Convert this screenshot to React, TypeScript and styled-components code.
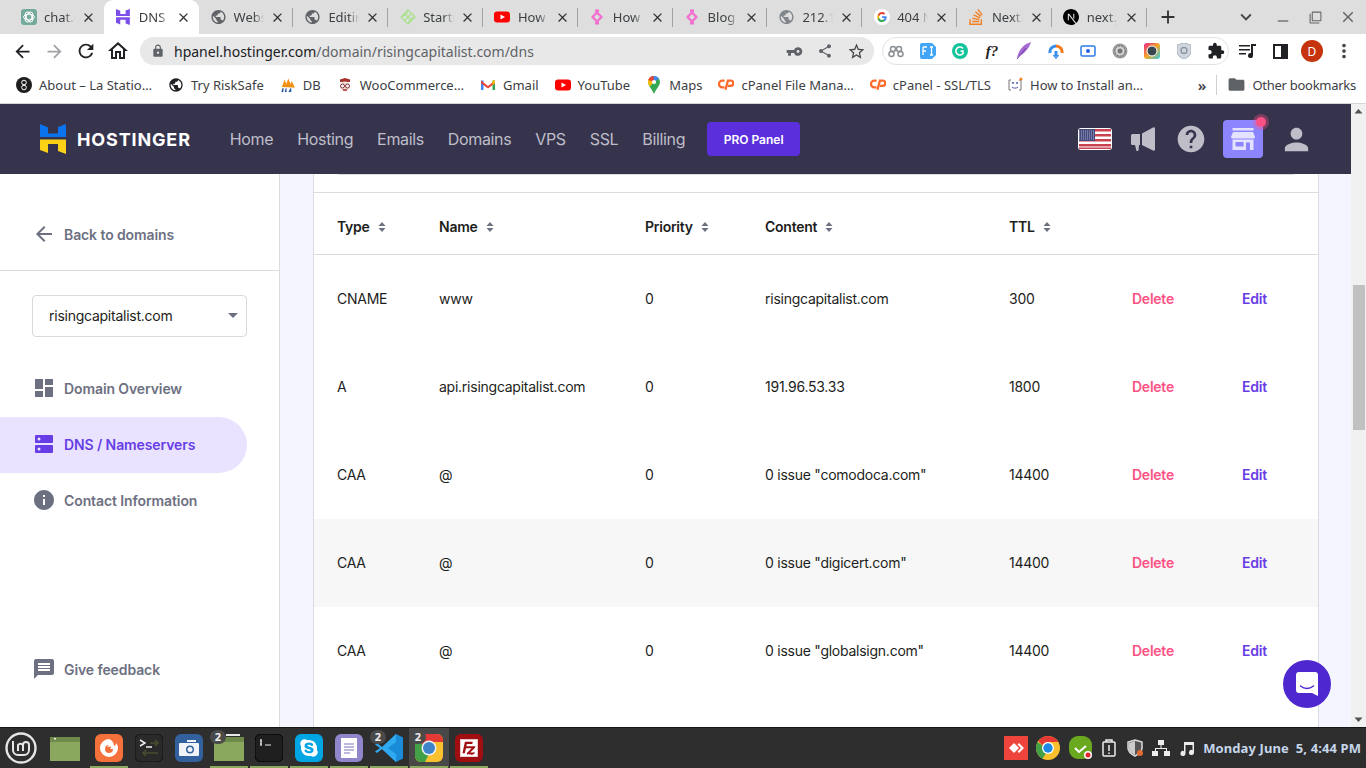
import React from "react"
import styled, { createGlobalStyle } from "styled-components"
import {
  MdAdd,
  MdArrowBack,
  MdArrowForward,
  MdClose,
  MdExtension,
  MdFolder,
  MdHelp,
  MdInfo,
  MdLock,
  MdMessage,
  MdMoreVert,
  MdOutlineHome,
  MdPerson,
  MdPublic,
  MdRefresh,
  MdShare,
  MdStarBorder,
  MdVpnKey,
  MdKeyboardArrowDown,
  MdRemove,
  MdFilterNone,
} from "react-icons/md"
import { FaSkype } from "react-icons/fa"
import { SiFilezilla, SiNextdotjs, SiStackoverflow } from "react-icons/si"

const UI_FONT = `"Noto Sans", "Liberation Sans", sans-serif`
const PANEL_FONT = `Inter, "Liberation Sans", sans-serif`

const GlobalStyle = createGlobalStyle`
  html, body {
    margin: 0;
    padding: 0;
    overflow: hidden;
    background: #fff;
  }
  * {
    box-sizing: border-box;
  }
`

const FontGlyph = styled.span`
  font-family: "Liberation Serif", serif;
  font-style: italic;
  font-weight: 700;
  font-size: 15px;
  color: #222;
`

// ---- little drawings ----

const ChatGptIcon = () => (
  <svg width="16" height="16" viewBox="0 0 16 16">
    <rect width="16" height="16" rx="3" fill="#74aa9c" />
    <g fill="none" stroke="#fff" strokeWidth="1">
      <ellipse cx="8" cy="8" rx="5.4" ry="2.8" />
      <ellipse cx="8" cy="8" rx="5.4" ry="2.8" transform="rotate(60 8 8)" />
      <ellipse cx="8" cy="8" rx="5.4" ry="2.8" transform="rotate(120 8 8)" />
    </g>
  </svg>
)

const HostingerMark = ({ size = 16, mono }: { size?: number; mono?: string }) => (
  <svg width={(size * 26) / 30} height={size} viewBox="0 0 26 30">
    <polygon points="0,0 8,3.5 8,9.5 18,9.5 18,3 26,0 26,13 0,13" fill={mono ?? "#0c73ef"} />
    <polygon points="0,15.5 26,15.5 26,30 18,27 18,20 8,20 8,29 0,26" fill={mono ?? "#fcd116"} />
  </svg>
)

const LatticeIcon = () => (
  <svg width="16" height="16" viewBox="0 0 16 16">
    <g fill="none" stroke="#a9e28c" strokeWidth="1.2">
      <rect x="3" y="3" width="10" height="10" transform="rotate(45 8 8)" />
      <path d="M4.5 4.5l7 7M11.5 4.5l-7 7M2.5 8l5.500-5.500M8 13.500L13.500 8" />
    </g>
  </svg>
)

const YoutubeIcon = () => (
  <svg width="16" height="16" viewBox="0 0 16 16">
    <rect y="2.500" width="16" height="11" rx="3" fill="#f00" />
    <polygon points="6.500,5.500 11,8 6.500,10.500" fill="#fff" />
  </svg>
)

const RingIcon = () => (
  <svg width="16" height="16" viewBox="0 0 16 16">
    <path d="M8 3.500L12.500 8 8 12.500 3.500 8z" fill="none" stroke="#f26fd0" strokeWidth="2.400" strokeLinejoin="round" />
    <path d="M6 0.500h4v2.500H6zM6 13h4v2.500H6z" fill="#f26fd0" />
  </svg>
)

const GoogleIcon = () => (
  <svg width="16" height="16" viewBox="0 0 16 16">
    <circle cx="8" cy="8" r="8" fill="#fff" />
    <path d="M12.600 8.200c0-.4 0-.7-.1-1H8v1.900h2.600c-.1.600-.5 1.100-1 1.500v1.200h1.600c.9-.9 1.400-2.100 1.400-3.600z" fill="#4285f4" />
    <path d="M8 13c1.300 0 2.400-.4 3.200-1.200l-1.600-1.200c-.4.300-1 .5-1.600.5-1.300 0-2.300-.8-2.700-2H3.700v1.300C4.500 12 6.100 13 8 13z" fill="#34a853" />
    <path d="M5.300 9.100a3 3 0 010-2V5.800H3.700a5 5 0 000 4.500z" fill="#fbbc05" />
    <path d="M8 5.100c.7 0 1.300.2 1.800.7l1.400-1.400C10.400 3.500 9.300 3 8 3 6.100 3 4.500 4.100 3.700 5.800l1.600 1.300c.4-1.200 1.400-2 2.700-2z" fill="#ea4335" />
  </svg>
)

const ChromeIcon = ({ size = 24 }: { size?: number }) => (
  <svg width={size} height={size} viewBox="0 0 24 24">
    <circle cx="12" cy="12" r="12" fill="#fbc02d" />
    <path d="M12 0a12 12 0 0110.400 6H12a6 6 0 00-5.500 3.500L2.300 4.900A12 12 0 0112 0z" fill="#e53935" />
    <path d="M1.600 6a12 12 0 005 16.700L11 15.500A6 6 0 016.500 9.500z" fill="#43a047" />
    <circle cx="12" cy="12" r="6" fill="#fff" />
    <circle cx="12" cy="12" r="4.700" fill="#1e88e5" />
  </svg>
)

const ChromeTile = () => (
  <svg width="28" height="28" viewBox="0 0 28 28">
    <rect width="28" height="28" rx="6" fill="#fbc02d" />
    <path d="M6 0h16a6 6 0 016 6v2H14a6 6 0 00-6 4L2 2a6 6 0 014-2z" fill="#e53935" />
    <path d="M2 2l6 10 6 8-4 8H6a6 6 0 01-6-6V6a6 6 0 012-4z" fill="#43a047" />
    <circle cx="14" cy="14" r="7.500" fill="#eef1f3" />
    <circle cx="14" cy="14" r="6" fill="#3f84c8" />
  </svg>
)

const GmailIcon = () => (
  <svg width="16" height="16" viewBox="0 0 16 16">
    <path d="M1 3.500h2.500V13H1z" fill="#4285f4" />
    <path d="M12.500 3.500H15V13h-2.500z" fill="#34a853" />
    <path d="M1 3.500L8 9l7-5.500v2.800L8 11.500 1 6.300z" fill="#ea4335" />
    <path d="M12.500 3.500H15v2.800l-2.500 1.900z" fill="#fbbc05" />
  </svg>
)

const MapsIcon = () => (
  <svg width="16" height="18" viewBox="0 0 16 18">
    <path d="M8 0a6 6 0 00-6 6c0 3.500 4 7 6 12 2-5 6-8.500 6-12a6 6 0 00-6-6z" fill="#34a853" />
    <path d="M3 2.500L8 6 13 2.500A6 6 0 008 0a6 6 0 00-5 2.500z" fill="#4285f4" />
    <path d="M2 6c0 1.500.7 3 1.700 4.500L8 6 3.300 2.200A6 6 0 002 6z" fill="#fbbc05" />
    <path d="M2.300 4L8 6l-.5-6a6 6 0 00-5.200 4z" fill="#ea4335" />
    <circle cx="8" cy="6" r="2.100" fill="#fff" />
  </svg>
)

const CpanelIcon = () => (
  <svg width="16" height="13" viewBox="0 0 17 13">
    <path d="M7 2.500H4.500a3.500 3.500 0 000 7H7" fill="none" stroke="#ff6c2c" strokeWidth="2.400" />
    <path d="M8 12l2.500-9.500h3a2.500 2.500 0 010 5.500H10.500" fill="none" stroke="#ff6c2c" strokeWidth="2.400" />
  </svg>
)

const WooIcon = () => (
  <svg width="16" height="16" viewBox="0 0 16 16">
    <path d="M3 5V2.500L8 1l5 1.500V5z" fill="#a8322d" />
    <circle cx="8" cy="9.500" r="5" fill="#f3ded8" />
    <circle cx="5.500" cy="9" r="2" fill="#fff" stroke="#803030" />
    <circle cx="10.500" cy="9" r="2" fill="#fff" stroke="#803030" />
    <path d="M6 13h4" stroke="#a8322d" strokeWidth="1.500" />
  </svg>
)

const PmaIcon = () => (
  <svg width="16" height="16" viewBox="0 0 17 16">
    <path d="M2 10l3-8 1.500 5L9 1l2 6 1.500-3L16 11z" fill="#f29111" />
    <rect x="1" y="11" width="15" height="4.500" fill="#fff" />
    <path d="M1.500 15.500l1-4h1.500l-.5 4zM5 15.500l1-4h1v4zM9 15.500l2-4h1v4z" fill="#2c5a9e" />
  </svg>
)

const StationIcon = () => (
  <svg width="16" height="16" viewBox="0 0 16 16">
    <circle cx="8" cy="8" r="8" fill="#1d1d1d" />
    <circle cx="8" cy="5.500" r="2.300" fill="none" stroke="#fff" />
    <circle cx="8" cy="10.500" r="2.300" fill="none" stroke="#fff" />
  </svg>
)

const HowInstallIcon = () => (
  <svg width="16" height="16" viewBox="0 0 16 16">
    <path d="M4 3H2v10h2M12 3h2v10h-2" fill="none" stroke="#777" />
    <path d="M5 10c1 1.500 5 1.500 6 0" fill="none" stroke="#4d5fa8" />
    <circle cx="6" cy="6" r="1" fill="#4d5fa8" />
    <circle cx="10" cy="6" r="1" fill="#4d5fa8" />
    <circle cx="14" cy="2" r="1.500" fill="#f58220" />
  </svg>
)

const tabIcons: Record<string, React.ReactNode> = {
  gpt: <ChatGptIcon />,
  hostinger: <HostingerMark size={16} mono="#7b4ee8" />,
  globe: <MdPublic size={18} color="#5f6368" />,
  globeLight: <MdPublic size={18} color="#80868b" />,
  lattice: <LatticeIcon />,
  yt: <YoutubeIcon />,
  ring: <RingIcon />,
  google: <GoogleIcon />,
  so: <SiStackoverflow size={16} color="#f48024" />,
  next: <SiNextdotjs size={16} color="#000" />,
}

const tabs = [
  { icon: "gpt", label: "chat.openai.com" },
  { icon: "hostinger", label: "DNS / Nameservers", active: true },
  { icon: "globe", label: "Website" },
  { icon: "globe", label: "Editing" },
  { icon: "lattice", label: "Startup" },
  { icon: "yt", label: "How to" },
  { icon: "ring", label: "How to" },
  { icon: "ring", label: "Blog" },
  { icon: "globeLight", label: "212.1.209" },
  { icon: "google", label: "404 Not" },
  { icon: "so", label: "Next.js" },
  { icon: "next", label: "next.js" },
]

const extensionIcons: React.ReactNode[] = [
  <svg key="a" width="18" height="18" viewBox="0 0 18 18" fill="none" stroke="#8a8f94" strokeWidth="1.500">
    <circle cx="6" cy="7" r="2.500" />
    <circle cx="12" cy="7" r="2.500" />
    <circle cx="4.500" cy="12" r="2.500" />
    <circle cx="13.500" cy="12" r="2.500" />
  </svg>,
  <svg key="b" width="16" height="16" viewBox="0 0 16 16">
    <path d="M2 0h10l4 4v8l-4 4H2a2 2 0 01-2-2V2a2 2 0 012-2z" fill="#42a5f5" />
    <path d="M3 4h4M3 4v8M3 8h3M10 4h3M10 12h3M11.500 4v8" stroke="#fff" strokeWidth="1.300" fill="none" />
  </svg>,
  <svg key="c" width="16" height="16" viewBox="0 0 16 16">
    <circle cx="8" cy="8" r="8" fill="#15c39a" />
    <path d="M11 5.500a4 4 0 100 5v-2.500H8.500" fill="none" stroke="#fff" strokeWidth="1.600" />
  </svg>,
  <FontGlyph key="d">f?</FontGlyph>,
  <svg key="e" width="16" height="18" viewBox="0 0 16 18">
    <path d="M15 0C8 2 3 7 1 16c2-2 5-3 7-5 3-3 6-7 7-11z" fill="#a56ad4" />
    <path d="M1 17L10 6" stroke="#6f3fa8" strokeWidth="1" />
  </svg>,
  <svg key="f" width="16" height="16" viewBox="0 0 16 16" fill="none" strokeWidth="3">
    <path d="M2 10a6 6 0 016-7" stroke="#3b8fe8" />
    <path d="M8 3a6 6 0 016 7" stroke="#f57c20" />
    <path d="M8 8v5" stroke="#3b8fe8" />
    <path d="M5.500 12L8 15l2.500-3" stroke="#3b8fe8" strokeWidth="1.500" />
  </svg>,
  <svg key="g" width="16" height="14" viewBox="0 0 16 14">
    <rect x="1" y="2" width="14" height="10" rx="1.500" fill="#fff" stroke="#2a7ae8" strokeWidth="1.500" />
    <circle cx="8" cy="7" r="2" fill="#2a5ae8" />
  </svg>,
  <svg key="h" width="16" height="16" viewBox="0 0 16 16">
    <circle cx="8" cy="8" r="7.500" fill="#9a9a9a" />
    <circle cx="8" cy="8" r="5" fill="#d4d4d4" stroke="#6e6e6e" strokeDasharray="2 1" />
    <circle cx="8" cy="8" r="2.500" fill="#777" />
  </svg>,
  <svg key="i" width="16" height="16" viewBox="0 0 16 16">
    <defs>
      <linearGradient id="insp" x1="0" y1="0" x2="1" y2="1">
        <stop offset="0" stopColor="#e91e8c" />
        <stop offset="0.500" stopColor="#f5a623" />
        <stop offset="1" stopColor="#2ecbe8" />
      </linearGradient>
    </defs>
    <rect width="16" height="16" rx="3" fill="url(#insp)" />
    <circle cx="8" cy="8" r="5" fill="#37474f" stroke="#fff" />
  </svg>,
  <svg key="j" width="14" height="16" viewBox="0 0 14 16">
    <path d="M7 0l7 2v6c0 4-3 6.500-7 8-4-1.500-7-4-7-8V2z" fill="#cfd6de" stroke="#aab4be" />
    <circle cx="7" cy="7.500" r="3" fill="none" stroke="#8b97a3" strokeWidth="1.400" />
  </svg>,
  <MdExtension key="k" size={18} color="#202124" />,
]

const bookmarks: { icon: React.ReactNode; label: string }[] = [
  { icon: <StationIcon />, label: "About – La Statio…" },
  { icon: <MdPublic size={18} color="#202124" />, label: "Try RiskSafe" },
  { icon: <PmaIcon />, label: "DB" },
  { icon: <WooIcon />, label: "WooCommerce…" },
  { icon: <GmailIcon />, label: "Gmail" },
  { icon: <YoutubeIcon />, label: "YouTube" },
  { icon: <MapsIcon />, label: "Maps" },
  { icon: <CpanelIcon />, label: "cPanel File Mana…" },
  { icon: <CpanelIcon />, label: "cPanel - SSL/TLS" },
  { icon: <HowInstallIcon />, label: "How to Install an…" },
]

const navLinks = ["Home", "Hosting", "Emails", "Domains", "VPS", "SSL", "Billing"]

const records = [
  { type: "CNAME", name: "www", priority: "0", content: "risingcapitalist.com", ttl: "300" },
  { type: "A", name: "api.risingcapitalist.com", priority: "0", content: "191.96.53.33", ttl: "1800" },
  { type: "CAA", name: "@", priority: "0", content: '0 issue "comodoca.com"', ttl: "14400" },
  { type: "CAA", name: "@", priority: "0", content: '0 issue "digicert.com"', ttl: "14400", striped: true },
  { type: "CAA", name: "@", priority: "0", content: '0 issue "globalsign.com"', ttl: "14400" },
]

const columns = ["Type", "Name", "Priority", "Content", "TTL"]

const SortIcon = () => (
  <svg width="8" height="12" viewBox="0 0 8 12">
    <path d="M4 1l3.500 4h-7zM4 11L.5 7h7z" fill="#6d7081" />
  </svg>
)

const FlagIcon = () => (
  <svg width="34" height="22" viewBox="0 0 34 22">
    <rect width="34" height="22" rx="3" fill="#fff" />
    <g fill="#c8424f">
      <rect x="1" y="1" width="32" height="2.500" />
      <rect x="1" y="6" width="32" height="2.500" />
      <rect x="1" y="11" width="32" height="2.500" />
      <rect x="1" y="16" width="32" height="2.500" />
      <rect x="1" y="19.500" width="32" height="1.500" />
    </g>
    <rect x="1" y="1" width="16" height="12" fill="#454a7e" />
    <g fill="none" stroke="#a7a9c6" strokeWidth="1" strokeDasharray="1 1">
      <path d="M1 3h16M1 5h16M1 7h16M1 9h16M1 11h16" />
    </g>
  </svg>
)

const MegaphoneIcon = () => (
  <svg width="24" height="24" viewBox="0 0 24 24" fill="#bfbec8">
    <path d="M1.500 7H9v11H8l-.5 5.500a1 1 0 01-1 .5H5.500L4 18H1.500A1.500 1.500 0 010 16.500v-8A1.500 1.500 0 011.500 7z" />
    <path d="M11 6.500L22 .5a1.500 1.500 0 012 1.300v20.400a1.500 1.500 0 01-2 1.300L11 18z" />
  </svg>
)

const StoreIcon = () => (
  <svg width="24" height="22" viewBox="0 0 24 22">
    <rect x="1.500" width="21" height="2.500" fill="#e4e2ff" />
    <path d="M2 4h20l2 5a1.500 1.500 0 01-1.500 1.500h-21A1.500 1.500 0 010 9z" fill="#e4e2ff" />
    <path d="M1.500 11.500h21V22h-3.500v-7.500h-4V22H1.500z" fill="#e4e2ff" />
    <rect x="4.500" y="14" width="8" height="4.500" fill="#8c85ff" />
  </svg>
)

const OverviewIcon = () => (
  <svg width="18" height="18" viewBox="0 0 18 18" fill="#6d7081">
    <rect width="8" height="10" />
    <rect x="10" width="8" height="6" />
    <rect y="12" width="8" height="6" />
    <rect x="10" y="8" width="8" height="10" />
  </svg>
)

const ServersIcon = () => (
  <svg width="18" height="18" viewBox="0 0 18 18">
    <rect width="18" height="8" rx="1" fill="#673de6" />
    <rect y="10" width="18" height="8" rx="1" fill="#673de6" />
    <circle cx="4" cy="4" r="1.500" fill="#e9e3ff" />
    <circle cx="4" cy="14" r="1.500" fill="#e9e3ff" />
  </svg>
)

const ChatBubbleIcon = () => (
  <svg width="24" height="26" viewBox="0 0 24 26">
    <path d="M4 1h16a3 3 0 013 3v21l-6-3H4a3 3 0 01-3-3V4a3 3 0 013-3z" fill="#fff" />
    <path d="M5.500 15c4 3 9 3 13 0" fill="none" stroke="#4f27cf" strokeWidth="1.500" strokeLinecap="round" />
  </svg>
)

// ---- taskbar drawings ----

const MintIcon = () => (
  <svg width="32" height="32" viewBox="0 0 32 32" fill="none" stroke="#e6e6e6">
    <circle cx="16" cy="16" r="14.500" strokeWidth="2.400" />
    <path d="M8 9v9a5 5 0 005 5h6a5 5 0 005-5v-5a3 3 0 00-6 0v6M13 19v-6a3 3 0 015 0" strokeWidth="2" />
  </svg>
)

const FolderIcon = ({ tab }: { tab?: boolean }) => (
  <svg width="30" height="28" viewBox="0 0 30 28">
    <rect x="0" y="3" width="30" height="24" fill="#8aa85e" />
    <rect x="0" y="3" width="30" height="5" fill="#6f8b49" />
    {tab ? <rect x="12" y="0" width="14" height="2" fill="#e8e8e8" /> : <rect x="4" y="4" width="2" height="1.500" fill="#eee" />}
  </svg>
)

const FirefoxIcon = () => (
  <svg width="28" height="28" viewBox="0 0 28 28">
    <rect width="28" height="28" rx="6" fill="#f4713c" />
    <path d="M14 5a9 9 0 109 9c0-2-1-4-2-5 0 2-1 3-2 3 0-3-2-6-5-7z" fill="#fff" />
    <path d="M14 11a4 4 0 104 4h-3l1.500-2.500L12 13z" fill="#f4713c" />
  </svg>
)

const TerminalArrowIcon = () => (
  <svg width="28" height="28" viewBox="0 0 28 28">
    <rect width="28" height="28" rx="6" fill="#2a2a2a" stroke="#111" />
    <path d="M5 6l5 3-5 3M11 13h6" fill="none" stroke="#eee" strokeWidth="1.500" />
    <path d="M15 9h8M20 6l3 3-3 3M8 19h15M11 16l-3 3 3 3" fill="none" stroke="#4a4c2c" strokeWidth="1.500" />
  </svg>
)

const CameraIcon = () => (
  <svg width="28" height="28" viewBox="0 0 28 28">
    <rect width="28" height="28" rx="6" fill="#33619e" />
    <rect x="4" y="9" width="20" height="13" rx="1" fill="#f0f4f8" />
    <rect x="12" y="6" width="9" height="2" fill="#f0f4f8" />
    <circle cx="15" cy="15.500" r="4" fill="#33619e" />
    <circle cx="15" cy="15.500" r="2.500" fill="#f0f4f8" />
  </svg>
)

const ShellIcon = () => (
  <svg width="28" height="28" viewBox="0 0 28 28">
    <rect width="28" height="28" rx="6" fill="#1f1f1f" stroke="#000" />
    <path d="M5 7h2M5 10h2M6 5v7M10 11h6" stroke="#eee" strokeWidth="1.200" />
  </svg>
)

const SkypeIcon = () => (
  <svg width="28" height="28" viewBox="0 0 28 28">
    <rect width="28" height="28" rx="6" fill="#00a5e3" />
    <g transform="translate(4 4)">
      <FaSkype size={20} color="#fff" />
    </g>
  </svg>
)

const NotesIcon = () => (
  <svg width="28" height="28" viewBox="0 0 28 28">
    <rect width="28" height="28" rx="6" fill="#8f86cc" />
    <rect x="6" y="4" width="16" height="20" fill="#fff" />
    <path d="M9 10h10M9 13h10M9 16h10M9 19h6" stroke="#7c74b8" />
  </svg>
)

const VsCodeIcon = () => (
  <svg width="30" height="30" viewBox="0 0 30 30">
    <path d="M22 1l7 3.500v21L22 29 8 16z" fill="#1a8bd6" />
    <path d="M22 1L8 14 3 10 1 11.500 6 15l-5 3.500L3 20l5-4 14 13V21l-8-6 8-6z" fill="#2fa9f0" />
  </svg>
)

const FileZillaIcon = () => (
  <svg width="28" height="28" viewBox="0 0 28 28">
    <rect width="28" height="28" rx="6" fill="#a00e12" />
    <g transform="translate(5 5)">
      <SiFilezilla size={18} color="#fff" />
    </g>
  </svg>
)

const taskItems = [
  { icon: <FirefoxIcon />, running: true },
  { icon: <TerminalArrowIcon /> },
  { icon: <CameraIcon /> },
  { icon: <FolderIcon tab />, running: true, badge: "2" },
  { icon: <ShellIcon />, running: true },
  { icon: <SkypeIcon />, running: true },
  { icon: <NotesIcon />, running: true },
  { icon: <VsCodeIcon />, running: true, badge: "2" },
  { icon: <ChromeTile />, running: true, badge: "2", focused: true },
  { icon: <FileZillaIcon />, running: true },
]

const trayIcons: React.ReactNode[] = [
  <svg key="any" width="24" height="24" viewBox="0 0 24 24">
    <rect width="24" height="24" fill="#ef443b" />
    <path d="M10 7l5 5-5 5-5-5z" fill="#fff" />
    <path d="M15 7l5 5-5 5 -1.500-1.500L17 12l-3.500-3.500z" fill="#fff" />
  </svg>,
  <ChromeIcon key="chrome" size={24} />,
  <svg key="green" width="24" height="24" viewBox="0 0 24 24">
    <rect width="23" height="23" rx="9" fill="#6aa820" />
    <path d="M6 12l4 4 7-6" fill="none" stroke="#fff" strokeWidth="2" />
    <circle cx="19" cy="19" r="4" fill="#fff" />
    <circle cx="19" cy="19" r="2.500" fill="#e5232a" />
  </svg>,
  <svg key="clip" width="16" height="18" viewBox="0 0 16 18" fill="none" stroke="#ededed" strokeWidth="1.500">
    <rect x="2" y="3" width="12" height="14" rx="1" />
    <path d="M5 3V1h6v2M8 6v6M8 13.500v1.500" />
  </svg>,
  <svg key="shield" width="18" height="18" viewBox="0 0 18 18">
    <path d="M9 1l7 2v6c0 4-3 6-7 8-4-2-7-4-7-8V3z" fill="#555" stroke="#ddd" strokeWidth="1.500" />
    <path d="M9 2v14c-3-2-6-3-6-7V4z" fill="#ccc" />
    <circle cx="14" cy="14" r="3" fill="#e06c32" />
  </svg>,
  <svg key="net" width="18" height="16" viewBox="0 0 18 16" fill="#ededed">
    <rect x="6" y="0" width="6" height="5" />
    <rect x="0" y="11" width="6" height="5" />
    <rect x="12" y="11" width="6" height="5" />
    <path d="M8.500 5h1v3H15v3h-1V9H4v2H3V8h5.500z" />
  </svg>,
  <svg key="music" width="16" height="16" viewBox="0 0 16 16" fill="#ededed">
    <path d="M5 2h10v10.500a2.500 2.500 0 11-1.500-2.300V5H6.500v8.500a2.500 2.500 0 11-1.500-2.300z" />
  </svg>,
]

function App() {
  return (
    <Screen>
      <GlobalStyle />

      <TabStrip>
        {tabs.map((tab, i) => (
          <Tab key={i} $active={tab.active} $divider={!tab.active && i !== 0 && i !== 1}>
            <TabIcon>{tabIcons[tab.icon]}</TabIcon>
            <TabLabel>{tab.label}</TabLabel>
            <TabClose>
              <MdClose size={15} />
            </TabClose>
          </Tab>
        ))}
        <NewTab>
          <MdAdd size={22} />
        </NewTab>
        <WindowControls>
          <MdKeyboardArrowDown size={22} color="#45474a" />
          <MinimizeIcon size={18} color="#777" />
          <MdFilterNone size={13} color="#666" />
          <MdClose size={18} color="#666" />
        </WindowControls>
      </TabStrip>

      <Toolbar>
        <ToolButton>
          <MdArrowBack size={21} color="#202124" />
        </ToolButton>
        <ToolButton>
          <MdArrowForward size={21} color="#a0a2a5" />
        </ToolButton>
        <ToolButton>
          <MdRefresh size={22} color="#202124" />
        </ToolButton>
        <ToolButton>
          <MdOutlineHome size={24} color="#202124" />
        </ToolButton>
        <Omnibox>
          <MdLock size={14} color="#5f6368" />
          <Url>
            <strong>hpanel.hostinger.com</strong>/domain/risingcapitalist.com/dns
          </Url>
          <OmniActions>
            <KeyIcon size={17} color="#5f6368" />
            <MdShare size={16} color="#5f6368" />
            <MdStarBorder size={19} color="#45474a" />
          </OmniActions>
        </Omnibox>
        <ExtensionPill>
          <ExtensionRow>
            {extensionIcons.map((icon, i) => (
              <ToolButton key={i}>{icon}</ToolButton>
            ))}
          </ExtensionRow>
        </ExtensionPill>
        <ToolTail>
          <ToolButton>
            <svg width="18" height="16" viewBox="0 0 18 16" fill="#202124">
              <path d="M0 2h11v1.500H0zM0 6h11v1.500H0zM0 10h7v1.500H0zM12 1h5v2h-3v9.500a2.500 2.500 0 11-2-2.400z" />
            </svg>
          </ToolButton>
          <ToolButton>
            <svg width="15" height="15" viewBox="0 0 15 15">
              <rect x="1" y="1" width="13" height="13" fill="#fff" stroke="#202124" strokeWidth="2" />
              <rect x="8" y="1" width="6" height="13" fill="#202124" />
            </svg>
          </ToolButton>
          <ToolButton>
            <Avatar>D</Avatar>
          </ToolButton>
          <ToolButton>
            <MdMoreVert size={22} color="#45474a" />
          </ToolButton>
        </ToolTail>
      </Toolbar>

      <BookmarkBar>
        {bookmarks.map((b) => (
          <Bookmark key={b.label}>
            <BookmarkIcon>{b.icon}</BookmarkIcon>
            <span>{b.label}</span>
          </Bookmark>
        ))}
        <BookmarkTail>
          <Chevrons>»</Chevrons>
          <BarDivider />
          <MdFolder size={19} color="#5f6368" />
          <OtherLabel>Other bookmarks</OtherLabel>
        </BookmarkTail>
      </BookmarkBar>

      <Viewport>
        <Page>
          <Header>
            <Logo>
              <HostingerMark size={30} />
              <LogoText>HOSTINGER</LogoText>
            </Logo>
            <Nav>
              {navLinks.map((link) => (
                <NavLink key={link}>{link}</NavLink>
              ))}
            </Nav>
            <ProButton>PRO Panel</ProButton>
            <HeaderIcons>
              <FlagIcon />
              <MegaphoneSlot>
                <MegaphoneIcon />
              </MegaphoneSlot>
              <MdHelp size={32} color="#bfbec8" />
              <StoreButton>
                <StoreIcon />
                <StoreDot />
              </StoreButton>
              <MdPerson size={35} color="#bfbec8" />
            </HeaderIcons>
          </Header>

          <Body>
            <Sidebar>
              <BackRow>
                <MdArrowBack size={24} />
                <span>Back to domains</span>
              </BackRow>
              <DomainSelect>
                <span>risingcapitalist.com</span>
                <svg width="10" height="5" viewBox="0 0 10 5">
                  <path d="M0 0h10L5 5z" fill="#6d7081" />
                </svg>
              </DomainSelect>
              <SideMenu>
                <SideItem>
                  <SideIcon>
                    <OverviewIcon />
                  </SideIcon>
                  Domain Overview
                </SideItem>
                <SideItem $active>
                  <SideIcon>
                    <ServersIcon />
                  </SideIcon>
                  DNS / Nameservers
                </SideItem>
                <SideItem>
                  <SideIcon>
                    <MdInfo size={24} />
                  </SideIcon>
                  Contact Information
                </SideItem>
              </SideMenu>
              <Feedback>
                <SideIcon>
                  <MdMessage size={24} />
                </SideIcon>
                Give feedback
              </Feedback>
            </Sidebar>

            <Main>
              <Card>
                <CardTop />
                <HeadRow>
                  {columns.map((col) => (
                    <HeadCell key={col}>
                      {col}
                      <SortIcon />
                    </HeadCell>
                  ))}
                </HeadRow>
                {records.map((r, i) => (
                  <Row key={i} $striped={r.striped}>
                    <div>{r.type}</div>
                    <div>{r.name}</div>
                    <div>{r.priority}</div>
                    <div>{r.content}</div>
                    <div>{r.ttl}</div>
                    <ActionLink $danger>Delete</ActionLink>
                    <ActionLink>Edit</ActionLink>
                  </Row>
                ))}
              </Card>
            </Main>
          </Body>
          <ChatButton>
            <ChatBubbleIcon />
          </ChatButton>
        </Page>

        <Scrollbar>
          <ScrollArrow viewBox="0 0 15 15">
            <path d="M3.500 9.500L7.500 5l4 4.500z" fill="#505050" />
          </ScrollArrow>
          <ScrollThumb />
          <ScrollArrow viewBox="0 0 15 15" $bottom>
            <path d="M3.500 5.500h8l-4 4.500z" fill="#505050" />
          </ScrollArrow>
        </Scrollbar>
      </Viewport>

      <Taskbar>
        <MintSlot>
          <MintIcon />
        </MintSlot>
        <TaskSlot>
          <FolderIcon />
        </TaskSlot>
        <TaskGroup>
          {taskItems.map((item, i) => (
            <TaskSlot key={i} $running={item.running} $focused={item.focused}>
              {item.icon}
              {item.badge && <TaskBadge>{item.badge}</TaskBadge>}
            </TaskSlot>
          ))}
        </TaskGroup>
        <Tray>
          {trayIcons.map((icon, i) => (
            <TrayIcon key={i}>{icon}</TrayIcon>
          ))}
          <Clock>Monday June  5, 4:44 PM</Clock>
        </Tray>
      </Taskbar>
    </Screen>
  )
}

export default App

const Screen = styled.div`
  display: flex;
  flex-direction: column;
  width: 1366px;
  height: 768px;
  overflow: hidden;
  font-family: ${UI_FONT};
`

const TabStrip = styled.div`
  display: flex;
  align-items: stretch;
  flex: none;
  height: 34px;
  padding-left: 9px;
  background: #dedede;
`
const Tab = styled.div<{ $active?: boolean; $divider?: boolean }>`
  position: relative;
  display: flex;
  align-items: center;
  flex: none;
  width: 94.8px;
  padding: 0 8px 0 11px;
  border-radius: 9px 9px 0 0;
  background: ${(p) => (p.$active ? "#fff" : "transparent")};
  ${(p) =>
    p.$divider &&
    `&::after {
      content: "";
      position: absolute;
      right: 0;
      top: 8px;
      bottom: 7px;
      width: 1px;
      background: #a3a3a3;
    }`}
`
const TabIcon = styled.span`
  display: flex;
  align-items: center;
  justify-content: center;
  flex: none;
  width: 17px;
  height: 18px;
`
const TabLabel = styled.span`
  flex: 1;
  min-width: 0;
  margin-left: 7px;
  overflow: hidden;
  white-space: nowrap;
  font-size: 13px;
  color: #3c4043;
  -webkit-mask-image: linear-gradient(to right, #000 65%, transparent 100%);
  mask-image: linear-gradient(to right, #000 65%, transparent 100%);
`
const TabClose = styled.span`
  display: flex;
  flex: none;
  margin-left: 6px;
  color: #333;
`
const NewTab = styled.span`
  display: flex;
  align-items: center;
  margin-left: 10px;
  color: #303134;
`
const WindowControls = styled.div`
  display: flex;
  align-items: center;
  gap: 17px;
  margin-left: auto;
  padding-right: 9px;
`
const MinimizeIcon = styled(MdRemove)`
  margin-top: 7px;
`

const Toolbar = styled.div`
  display: flex;
  align-items: center;
  flex: none;
  height: 34px;
  padding-left: 6px;
  background: #fff;
`
const ToolButton = styled.span`
  display: flex;
  align-items: center;
  justify-content: center;
  flex: none;
  width: 32px;
  height: 28px;
`
const Omnibox = styled.div`
  display: flex;
  align-items: center;
  flex: none;
  width: 734px;
  height: 28px;
  margin-left: 6px;
  padding: 0 8px 0 11px;
  border-radius: 14px;
  background: #e8e8e8;
`
const Url = styled.span`
  margin-left: 9px;
  font-size: 14px;
  color: #5f6368;
  white-space: nowrap;
  strong {
    font-weight: 400;
    color: #202124;
  }
`
const OmniActions = styled.span`
  display: flex;
  align-items: center;
  gap: 14px;
  margin-left: auto;
`
const KeyIcon = styled(MdVpnKey)`
  transform: scaleX(-1);
`
const ExtensionPill = styled.div`
  flex: none;
  width: 347px;
  height: 28px;
  margin-left: 8px;
  border: 1px solid #e3e3e3;
  border-radius: 14px;
  background: #fff;
`
const ExtensionRow = styled.div`
  display: flex;
  align-items: center;
  height: 26px;
  margin-left: -3px;
`
const ToolTail = styled.div`
  display: flex;
  align-items: center;
  margin-left: 3px;
`
const Avatar = styled.span`
  display: flex;
  align-items: center;
  justify-content: center;
  width: 22px;
  height: 22px;
  border-radius: 50%;
  background: #c5340f;
  color: #fff;
  font-size: 12px;
`

const BookmarkBar = styled.div`
  display: flex;
  align-items: center;
  flex: none;
  height: 36px;
  padding: 0 0 2px 16px;
  gap: 16px;
  background: #fff;
  border-bottom: 1px solid #d7d7d7;
  font-size: 13px;
  color: #3c4043;
`
const Bookmark = styled.div`
  display: flex;
  align-items: center;
  gap: 7px;
  white-space: nowrap;
`
const BookmarkIcon = styled.span`
  display: flex;
  align-items: center;
  justify-content: center;
  flex: none;
  width: 16px;
`
const BookmarkTail = styled.div`
  display: flex;
  align-items: center;
  margin-left: auto;
  padding-right: 10px;
`
const Chevrons = styled.span`
  font-size: 15px;
  font-weight: 600;
`
const BarDivider = styled.span`
  width: 1px;
  height: 20px;
  margin: 0 10px;
  background: #cfcfcf;
`
const OtherLabel = styled.span`
  margin-left: 6px;
  letter-spacing: -0.27px;
`

const Viewport = styled.div`
  display: flex;
  flex: none;
  height: 623px;
`
const Page = styled.div`
  position: relative;
  display: flex;
  flex-direction: column;
  flex: 1;
  min-width: 0;
  font-family: ${PANEL_FONT};
  font-size: 14px;
  letter-spacing: -0.25px;
  color: #1d1e20;
`

const Header = styled.header`
  display: flex;
  align-items: center;
  flex: none;
  height: 70px;
  padding: 0 37px 0 40px;
  background: #36344d;
`
const Logo = styled.div`
  display: flex;
  align-items: center;
  gap: 11px;
`
const LogoText = styled.span`
  font-size: 18px;
  font-weight: 700;
  letter-spacing: 0.85px;
  color: #fff;
`
const Nav = styled.nav`
  display: flex;
  gap: 24px;
  margin-left: 39px;
`
const NavLink = styled.a`
  font-size: 16px;
  color: #bfbec8;
  letter-spacing: -0.35px;
`
const ProButton = styled.button`
  width: 93px;
  height: 34px;
  margin-left: 22px;
  border: 0;
  border-radius: 4px;
  background: #5c2fdc;
  color: #fff;
  font-family: ${PANEL_FONT};
  font-size: 12px;
  font-weight: 600;
`
const HeaderIcons = styled.div`
  display: flex;
  align-items: center;
  gap: 16px;
  margin-left: auto;
`
const MegaphoneSlot = styled.span`
  display: flex;
  margin: 0 4px 0 3px;
`
const StoreButton = styled.div`
  position: relative;
  display: flex;
  align-items: center;
  justify-content: center;
  width: 40px;
  height: 38px;
  border-radius: 4px;
  background: #8c85ff;
`
const StoreDot = styled.span`
  position: absolute;
  top: -3px;
  right: -3px;
  width: 10px;
  height: 10px;
  border-radius: 50%;
  background: #fc5185;
  box-shadow: 0 0 0 3px rgba(252, 81, 133, 0.35);
`

const Body = styled.div`
  display: flex;
  flex: 1;
  min-height: 0;
`
const Sidebar = styled.aside`
  display: flex;
  flex-direction: column;
  flex: none;
  width: 280px;
  border-right: 1px solid #dadce0;
  background: #fff;
  letter-spacing: -0.1px;
`
const BackRow = styled.div`
  display: flex;
  align-items: center;
  gap: 8px;
  flex: none;
  height: 97px;
  padding: 24px 0 0 32px;
  border-bottom: 1px solid #dadce0;
  color: #6d7081;
  font-weight: 600;
`
const DomainSelect = styled.div`
  display: flex;
  align-items: center;
  justify-content: space-between;
  flex: none;
  width: 215px;
  height: 42px;
  margin: 24px 0 0 32px;
  padding: 0 8px 2px 16px;
  border: 1px solid #d8dae0;
  border-radius: 4px;
  letter-spacing: -0.25px;
`
const SideMenu = styled.div`
  margin-top: 24px;
`
const SideItem = styled.div<{ $active?: boolean }>`
  display: flex;
  align-items: center;
  width: 247px;
  height: 56px;
  padding: 0 0 2px 32px;
  border-radius: 0 28px 28px 0;
  background: ${(p) => (p.$active ? "#e9e3ff" : "transparent")};
  color: ${(p) => (p.$active ? "#673de6" : "#6d7081")};
  font-weight: 600;
`
const SideIcon = styled.span`
  display: flex;
  align-items: center;
  justify-content: center;
  flex: none;
  width: 24px;
  margin-right: 8px;
`
const Feedback = styled(SideItem)`
  margin-top: auto;
  margin-bottom: 29px;
`

const Main = styled.main`
  flex: 1;
  min-width: 0;
  padding: 0 32px 0 33px;
  background: #f4f5ff;
`
const Card = styled.section`
  height: 100%;
  border: solid #dadce0;
  border-width: 0 1px;
  background: #fff;
`
const CardTop = styled.div`
  height: 19px;
  border-bottom: 1px solid #dadce0;
  &::before {
    content: "";
    display: block;
    height: 1px;
    margin: 0 24px 0 24px;
    background: #dadce0;
  }
`
const rowColumns = "102px 206px 120px 244px 123px 110px 1fr"
const HeadRow = styled.div`
  display: grid;
  grid-template-columns: ${rowColumns};
  align-items: center;
  height: 62px;
  padding: 6px 0 0 23px;
  border-bottom: 1px solid #dadce0;
`
const HeadCell = styled.div`
  display: flex;
  align-items: center;
  gap: 8px;
  font-weight: 600;
`
const Row = styled.div<{ $striped?: boolean }>`
  display: grid;
  grid-template-columns: ${rowColumns};
  align-items: center;
  height: 88px;
  padding: 0 0 2px 23px;
  background: ${(p) => (p.$striped ? "#f7f7f7" : "#fff")};
`
const ActionLink = styled.a<{ $danger?: boolean }>`
  font-weight: 600;
  color: ${(p) => (p.$danger ? "#fc5185" : "#673de6")};
`
const ChatButton = styled.button`
  position: absolute;
  right: 20px;
  bottom: 19px;
  display: flex;
  align-items: center;
  justify-content: center;
  width: 48px;
  height: 48px;
  padding: 0;
  border: 0;
  border-radius: 50%;
  background: #4f27cf;
`

const Scrollbar = styled.div`
  display: flex;
  flex-direction: column;
  flex: none;
  width: 15px;
  background: #f1f1f1;
`
const ScrollArrow = styled.svg<{ $bottom?: boolean }>`
  flex: none;
  width: 15px;
  height: 15px;
  margin-top: ${(p) => (p.$bottom ? "auto" : "0")};
`
const ScrollThumb = styled.div`
  flex: none;
  width: 12px;
  height: 145px;
  margin: 166px 0 0 2px;
  background: #c1c1c1;
`

const Taskbar = styled.footer`
  display: flex;
  align-items: stretch;
  flex: none;
  height: 41px;
  border-top: 1px solid #161616;
  background: #2e2e2e;
`
const MintSlot = styled.div`
  display: flex;
  align-items: center;
  justify-content: center;
  flex: none;
  width: 42px;
  margin-right: 3px;
`
const TaskGroup = styled.div`
  display: flex;
  margin-left: 4px;
`
const TaskSlot = styled.div<{ $running?: boolean; $focused?: boolean }>`
  position: relative;
  display: flex;
  align-items: center;
  justify-content: center;
  flex: none;
  width: 40px;
  background: ${(p) => (p.$focused ? "#484848" : "transparent")};
  ${(p) =>
    p.$running &&
    `&::after {
      content: "";
      position: absolute;
      left: 1px;
      right: 1px;
      bottom: 0;
      height: 2px;
      background: #8aa85e;
    }`}
`
const TaskBadge = styled.span`
  position: absolute;
  top: 2px;
  left: 1px;
  min-width: 16px;
  height: 14px;
  border-radius: 8px;
  background: #4a4a4a;
  color: #eee;
  font-size: 11px;
  font-weight: 700;
  line-height: 14px;
  text-align: center;
`
const Tray = styled.div`
  display: flex;
  align-items: center;
  margin-left: auto;
  padding-right: 5px;
`
const TrayIcon = styled.span`
  display: flex;
  align-items: center;
  justify-content: center;
  flex: none;
  height: 24px;
  margin-right: 8.5px;
`
const Clock = styled.span`
  font-size: 13px;
  font-weight: 700;
  letter-spacing: 0.1px;
  color: #c5d6ea;
  white-space: pre;
`
